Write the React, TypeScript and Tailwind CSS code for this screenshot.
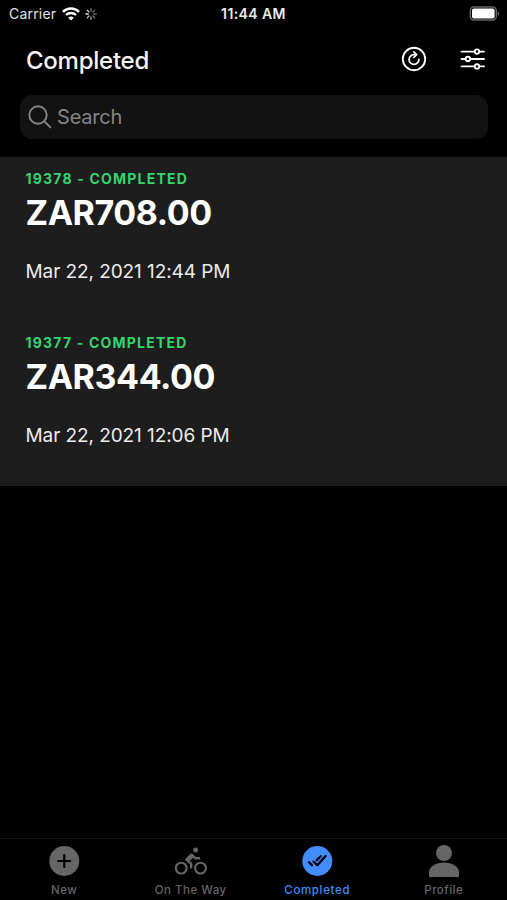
import type { ReactNode } from 'react'

const orders = [
  { id: '19378', amount: 'ZAR708.00', date: 'Mar 22, 2021 12:44 PM' },
  { id: '19377', amount: 'ZAR344.00', date: 'Mar 22, 2021 12:06 PM' },
]

function WifiIcon() {
  return (
    <svg width="18" height="14" viewBox="0 0 18 14" fill="none" stroke="white" strokeWidth="2.4">
      <path d="M1 4.8a11.3 11.3 0 0 1 16 0" />
      <path d="M4 8a7.1 7.1 0 0 1 10 0" />
      <path d="M9 13.6 6.2 10.8a4 4 0 0 1 5.6 0Z" fill="white" stroke="none" />
    </svg>
  )
}

function SpinnerIcon() {
  return (
    <svg width="12" height="12" viewBox="0 0 12 12" stroke="white" strokeWidth="1.3" strokeLinecap="round">
      <path d="M6 .8v2.4" opacity=".5" />
      <path d="m9.7 2.3-1.7 1.7" opacity=".4" />
      <path d="M11.2 6H8.8" opacity=".4" />
      <path d="M9.7 9.7 8 8" opacity=".45" />
      <path d="M6 11.2V8.8" opacity=".6" />
      <path d="M2.3 9.7 4 8" opacity=".75" />
      <path d="M.8 6h2.4" opacity=".9" />
      <path d="M2.3 2.3 4 4" opacity=".8" />
    </svg>
  )
}

function StatusBar() {
  return (
    <div className="grid h-7 grid-cols-[1fr_auto_1fr] items-center px-[7px] text-[14px] leading-none">
      <div className="flex items-center pl-[2px]">
        <span className="w-[53px] tracking-[0.2px] text-[#e2e2e2]">Carrier</span>
        <WifiIcon />
        <span className="ml-[5px]"><SpinnerIcon /></span>
      </div>
      <span className="text-center font-semibold tracking-[0.4px] text-[#ececec]">11:44 AM</span>
      <svg className="justify-self-end" width="31" height="16" viewBox="0 0 31 16">
        <rect x="1.3" y="1" width="26" height="13" rx="3.5" fill="none" stroke="#666" strokeWidth="1.4" />
        <rect x="3" y="2.5" width="22.6" height="10" rx="1.8" fill="white" />
        <path d="M28.6 5.2c2.2.8 2.2 3.8 0 4.6Z" fill="#666" />
      </svg>
    </div>
  )
}

function RefreshIcon() {
  return (
    <svg width="26" height="26" viewBox="0 0 26 26" fill="none" stroke="white">
      <circle cx="13" cy="13" r="11.2" strokeWidth="1.9" />
      <path d="M14 8.6H13a4.9 4.9 0 1 0 4.9 4.9" strokeWidth="1.8" strokeLinecap="round" />
      <path d="m12.8 5.9 2.9 2.7-2.9 2.9" strokeWidth="1.7" strokeLinecap="round" strokeLinejoin="round" />
    </svg>
  )
}

function FilterIcon() {
  return (
    <svg width="26" height="22" viewBox="0 0 26 22" fill="black" stroke="white" strokeWidth="1.9" strokeLinecap="round">
      <path d="M1.6 3.6h22.4M1.6 11h22.4M1.6 18.4h22.4" />
      <circle cx="17" cy="3.6" r="2.2" />
      <circle cx="7.9" cy="11" r="2.2" />
      <circle cx="17" cy="18.4" r="2.2" />
    </svg>
  )
}

function Tab({ label, active, children }: { label: string; active?: boolean; children: ReactNode }) {
  return (
    <div className={`flex flex-1 flex-col items-center pt-[6px] ${active ? 'text-[#428cff]' : 'text-[#666666]'}`}>
      <svg width="32" height="32" viewBox="0 0 32 32" fill="currentColor">{children}</svg>
      <span className={`mt-[6px] text-[11.5px] leading-[14px] font-medium ${active ? 'tracking-[0.65px]' : 'tracking-[0.5px]'}`}>{label}</span>
    </div>
  )
}

export default function App() {
  return (
    <div className="flex h-[900px] w-[507px] flex-col overflow-hidden bg-black font-['Inter','Liberation_Sans',sans-serif] text-white">
      <StatusBar />

      {/* Title and actions */}
      <header className="flex h-[62px] items-center pr-[21px] pl-[26px]">
        <h1 className="flex-1 pt-[3px] text-[24px] leading-none font-medium tracking-[-0.25px] text-[#f5f5f5]">Completed</h1>
        <RefreshIcon />
        <span className="ml-[33px]"><FilterIcon /></span>
      </header>

      <div className="mr-[19px] ml-5 mt-[5px] flex h-11 items-center rounded-[12px] bg-[#121212] pl-2 text-[#858585]">
        <svg width="24" height="24" viewBox="0 0 24 24" fill="none" stroke="currentColor" strokeWidth="1.9" strokeLinecap="round">
          <circle cx="10" cy="10" r="8.7" />
          <path d="m16.4 16.4 6 6" />
        </svg>
        <span className="ml-[5px] text-[20px] tracking-[-0.2px]">Search</span>
      </div>

      {/* Orders */}
      <main className="mt-[18px] flex h-[329px] flex-col bg-[#1d1d1d]">
        {orders.map((order) => (
          <div key={order.id} className="h-[164px] pt-[13px] pl-[25.5px]">
            <div className="text-[14px] leading-[18px] font-bold tracking-[1.2px] text-[#36d371]">
              {order.id} - COMPLETED
            </div>
            <div className="mt-[5px] text-[34px] leading-10 font-bold tracking-[-0.42px]">{order.amount}</div>
            <div className="mt-[27px] text-[19px] leading-6 tracking-[-0.08px] text-[#ececec]">{order.date}</div>
          </div>
        ))}
      </main>

      <div className="flex-1" />

      <nav className="flex h-[62px] border-t border-[#141414] pl-px">
        <Tab label="New">
          <circle cx="16.3" cy="16" r="15" />
          <path d="M16.3 10v12M10.3 16h12" stroke="black" strokeWidth="2.2" strokeLinecap="round" />
        </Tab>
        <Tab label="On The Way">
          <g fill="none" stroke="currentColor" strokeWidth="2.1">
            <circle cx="6.2" cy="23.1" r="5.4" />
            <circle cx="25.5" cy="23.1" r="5.4" />
            <path d="M16.2 23.6v-4.8l-4.6-4.3 5-4.9 3.6 3.6h4.9" strokeWidth="2.4" strokeLinejoin="round" />
          </g>
          <path d="m10.2 14.6 5-5.6 2.8.8.9 2.2-4.4 4Z" />
          <circle cx="20.6" cy="4.9" r="2.5" />
        </Tab>
        <Tab label="Completed" active>
          <circle cx="16.3" cy="16" r="15" />
          <path d="m8 17.3 3 3M12.6 16.7l3.7 3.6 8.3-9.4M15.7 15.2l4-4" fill="none" stroke="black" strokeWidth="2.3" strokeLinecap="round" strokeLinejoin="round" />
        </Tab>
        <Tab label="Profile">
          <circle cx="16" cy="8" r="8" />
          <path d="M1 32v-5c0-5.4 7.5-9.4 15-9.4s15 4 15 9.4v5Z" />
        </Tab>
      </nav>
    </div>
  )
}
